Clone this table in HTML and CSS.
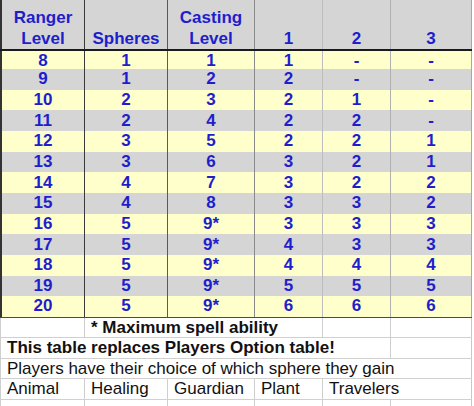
FILE: index.html
```html
<!DOCTYPE html>
<html>
<head>
<meta charset="utf-8">
<link rel="stylesheet" href="styles.css">
</head>
<body>
<div class="sheet">
  <div class="row head">
    <div class="c c0"><span>Ranger</span><span>Level</span></div>
    <div class="c c1"><span>Spheres</span></div>
    <div class="c c2"><span>Casting</span><span>Level</span></div>
    <div class="c c3"><span>1</span></div>
    <div class="c c4"><span>2</span></div>
    <div class="c c5"><span>3</span></div>
  </div>
  <div class="row data y first"><div class="c c0">8</div><div class="c c1">1</div><div class="c c2">1</div><div class="c c3">1</div><div class="c c4">-</div><div class="c c5">-</div></div>
  <div class="row data g"><div class="c c0">9</div><div class="c c1">1</div><div class="c c2">2</div><div class="c c3">2</div><div class="c c4">-</div><div class="c c5">-</div></div>
  <div class="row data y"><div class="c c0">10</div><div class="c c1">2</div><div class="c c2">3</div><div class="c c3">2</div><div class="c c4">1</div><div class="c c5">-</div></div>
  <div class="row data g"><div class="c c0">11</div><div class="c c1">2</div><div class="c c2">4</div><div class="c c3">2</div><div class="c c4">2</div><div class="c c5">-</div></div>
  <div class="row data y"><div class="c c0">12</div><div class="c c1">3</div><div class="c c2">5</div><div class="c c3">2</div><div class="c c4">2</div><div class="c c5">1</div></div>
  <div class="row data g"><div class="c c0">13</div><div class="c c1">3</div><div class="c c2">6</div><div class="c c3">3</div><div class="c c4">2</div><div class="c c5">1</div></div>
  <div class="row data y"><div class="c c0">14</div><div class="c c1">4</div><div class="c c2">7</div><div class="c c3">3</div><div class="c c4">2</div><div class="c c5">2</div></div>
  <div class="row data g"><div class="c c0">15</div><div class="c c1">4</div><div class="c c2">8</div><div class="c c3">3</div><div class="c c4">3</div><div class="c c5">2</div></div>
  <div class="row data y"><div class="c c0">16</div><div class="c c1">5</div><div class="c c2">9*</div><div class="c c3">3</div><div class="c c4">3</div><div class="c c5">3</div></div>
  <div class="row data g"><div class="c c0">17</div><div class="c c1">5</div><div class="c c2">9*</div><div class="c c3">4</div><div class="c c4">3</div><div class="c c5">3</div></div>
  <div class="row data y"><div class="c c0">18</div><div class="c c1">5</div><div class="c c2">9*</div><div class="c c3">4</div><div class="c c4">4</div><div class="c c5">4</div></div>
  <div class="row data g"><div class="c c0">19</div><div class="c c1">5</div><div class="c c2">9*</div><div class="c c3">5</div><div class="c c4">5</div><div class="c c5">5</div></div>
  <div class="row data y last"><div class="c c0">20</div><div class="c c1">5</div><div class="c c2">9*</div><div class="c c3">6</div><div class="c c4">6</div><div class="c c5">6</div></div>

  <div class="row foot">
    <div class="c c0"></div>
    <div class="c c1 span13 bold">* Maximum spell ability</div>
    <div class="c c4"></div>
    <div class="c c5"></div>
  </div>
  <div class="row foot">
    <div class="c c0 span04 bold">This table replaces Players Option table!</div>
    <div class="c c5"></div>
  </div>
  <div class="row foot">
    <div class="c c0 span05">Players have their choice of which sphere they gain</div>
  </div>
  <div class="row foot">
    <div class="c c0">Animal</div>
    <div class="c c1">Healing</div>
    <div class="c c2">Guardian</div>
    <div class="c c3">Plant</div>
    <div class="c c4 span45">Travelers</div>
  </div>
  <div class="row foot">
    <div class="c c0"></div>
    <div class="c c1"></div>
    <div class="c c2"></div>
    <div class="c c3"></div>
    <div class="c c4"></div>
    <div class="c c5"></div>
  </div>
</div>
</body>
</html>
```
FILE: styles.css
```css
html, body {
  margin: 0;
  padding: 0;
  background: #ffffff;
}

.sheet {
  width: 472px;
  font-family: "Liberation Sans", Arial, sans-serif;
  font-size: 17px;
}

.row {
  display: grid;
  grid-template-columns: 84px 83px 87px 68px 68px 82px;
  box-sizing: border-box;
}

.c {
  box-sizing: border-box;
  white-space: nowrap;
  overflow: visible;
}

/* header */
.head {
  height: 51px;
  background: #d5d5d5;
  border-bottom: 2px solid #1a1a1a;
}
.head .c {
  display: flex;
  flex-direction: column;
  justify-content: flex-end;
  align-items: center;
  line-height: 21px;
  font-weight: bold;
  color: #1e1ecc;
  padding-bottom: 0;
}

/* data rows */
.data {
  height: 20.67px;
}
.data.first {
  height: 18px;
}
.data.y { background: #ffffcc; }
.data.g { background: #d5d5d5; }
.data.last {
  height: 21.3px;
  border-bottom: 1px solid #4a4a4a;
}
.data .c {
  display: flex;
  align-items: center;
  justify-content: center;
  font-weight: bold;
  color: #1e1ecc;
}

/* vertical grid lines for header + data */
.head .c0, .data .c0 { border-left: 2px solid #333333; }
.head .c1, .data .c1 { border-left: 1px solid #3a3a3a; }
.head .c2, .data .c2 { border-left: 1px solid #5a5a5a; }
.head .c3, .data .c3 { border-left: 1px solid #8a8a8a; }
.head .c4, .data .c4 { border-left: 1px solid #bdbdbd; }
.head .c5, .data .c5 { border-left: 1px solid #b0b0b0; border-right: 1px solid #a8a8a8; }

/* footer rows */
.foot {
  height: 20.67px;
  border-bottom: 1px solid #d0d0d0;
  color: #111111;
}
.foot .c {
  line-height: 19px;
  padding-left: 6px;
  border-left: 1px solid #cfcfcf;
}
.foot .c5 { border-right: 1px solid #c8c8c8; }
.foot .span45 { border-right: 1px solid #c8c8c8; }
.foot .span05 { border-right: 1px solid #c8c8c8; }
.bold { font-weight: bold; }

.span13 { grid-column: 2 / 5; }
.span04 { grid-column: 1 / 6; }
.span05 { grid-column: 1 / 7; }
.span45 { grid-column: 5 / 7; }
```
